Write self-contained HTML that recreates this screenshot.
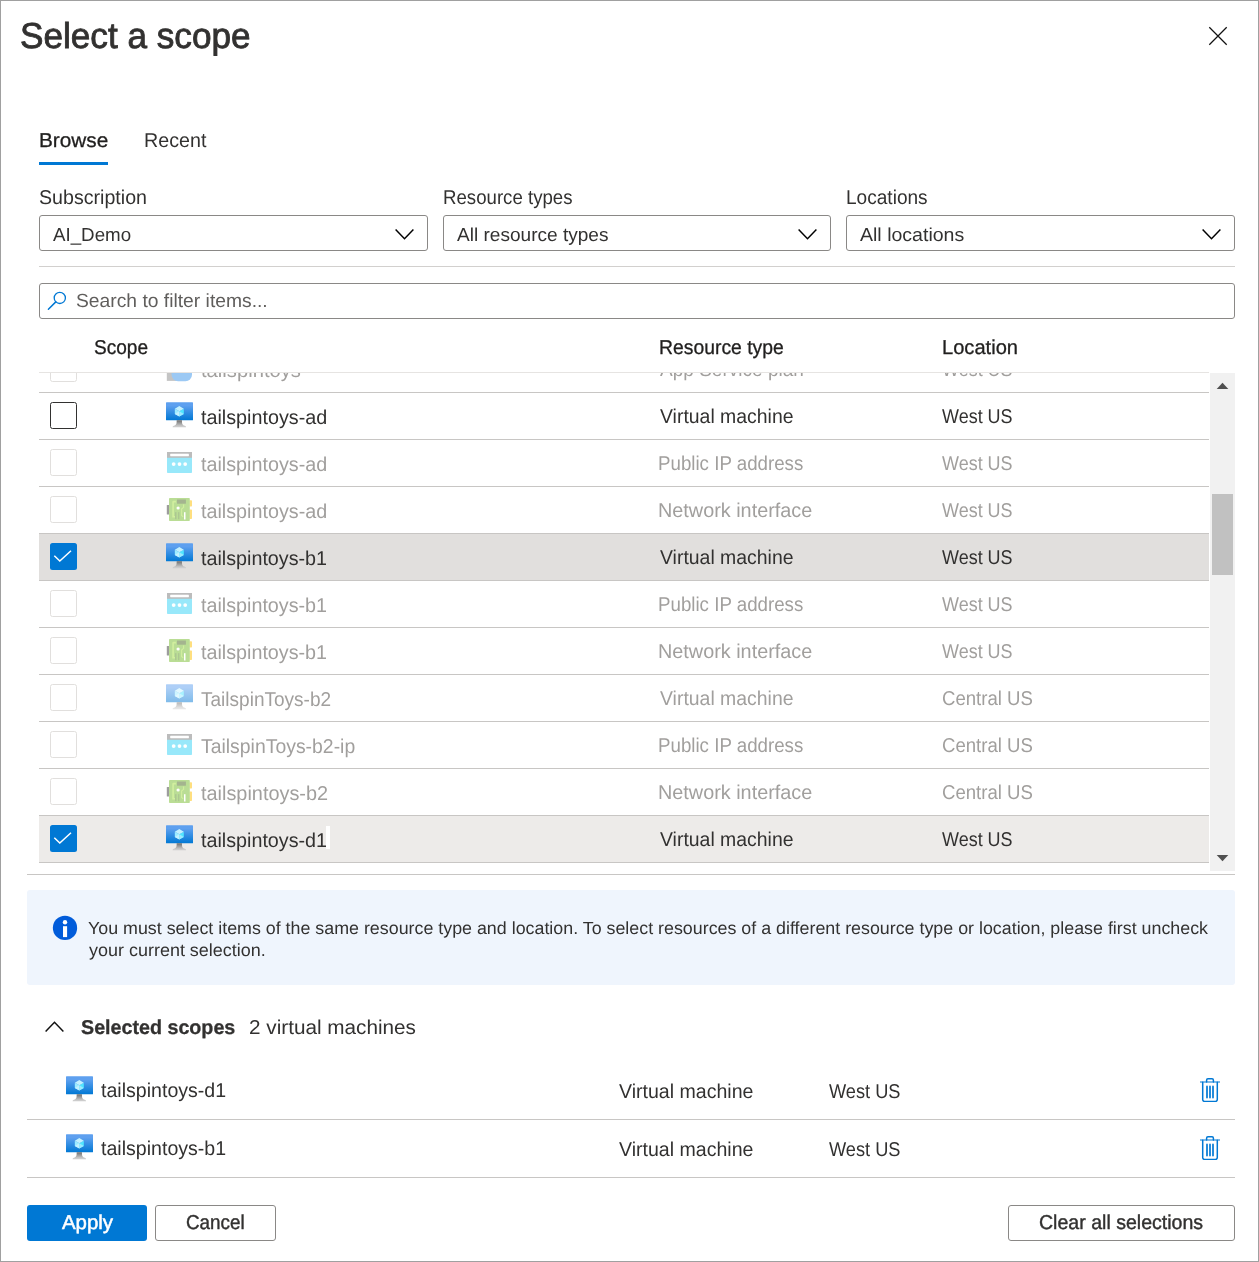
<!DOCTYPE html><html lang="en"><head><meta charset="utf-8"><title>Select a scope</title><style>
*{box-sizing:border-box;margin:0;padding:0}
html,body{width:1259px;height:1262px;background:#fff;overflow:hidden}
body{position:relative;font-family:"Liberation Sans",Arial,sans-serif}
.a{position:absolute}
.t{position:absolute;white-space:nowrap;line-height:normal;transform-origin:0 0;text-rendering:geometricPrecision}
.frame{left:0;top:0;width:1259px;height:1262px;border:1px solid #a0a0a0}
.dd{height:36px;top:215px;border:1px solid #8a8886;border-radius:3px;background:#fff}
.ln{height:1px;background:#c8c6c4}
.cb{width:27px;height:27px;left:50px;border-radius:2.5px}
.cb.en{border:1px solid #323130;background:#fff}
.cb.dis{border:1px solid #e1dfdd;background:#fff}
.cb.on{background:#0078d4}
.btn{top:1205px;height:36px;border-radius:3px}
.btn.sec{border:1px solid #8a8886;background:#fff}
.ic{position:absolute;width:27px;height:27px}
.dim{opacity:.5}
</style></head><body>

<svg width="0" height="0" style="position:absolute">
<defs>
<linearGradient id="vmA" x1="0" y1="12.21" x2="0" y2="0.21" gradientUnits="userSpaceOnUse"><stop offset="0" stop-color="#0078d4"/><stop offset="0.82" stop-color="#5ea0ef"/></linearGradient>
<linearGradient id="vmB" x1="0" y1="16.84" x2="0" y2="12.21" gradientUnits="userSpaceOnUse"><stop offset="0.15" stop-color="#ccc"/><stop offset="1" stop-color="#707070"/></linearGradient>
<symbol id="vm" viewBox="0 0 18 18">
<rect x="0" y="0.21" width="18" height="12" rx="0.4" fill="url(#vmA)"/>
<polygon points="11.88 4.46 11.88 7.95 8.88 9.71 8.88 6.21" fill="#50e6ff"/>
<polygon points="11.88 4.46 8.88 6.22 5.88 4.46 8.88 2.71" fill="#c3f1ff"/>
<polygon points="8.88 6.22 8.88 9.71 5.88 7.95 5.88 4.46" fill="#9cebff"/>
<polygon points="5.88 7.95 8.88 6.21 8.88 9.71" fill="#c3f1ff"/>
<polygon points="11.88 7.95 8.88 6.21 8.88 9.71" fill="#9cebff"/>
<path d="M12.49 15.84c-1.78-.28-1.85-1.56-1.85-3.63H7.11c0 2.07-.06 3.35-1.84 3.63a1 1 0 0 0-.89 1h9a1 1 0 0 0-.89-1z" fill="url(#vmB)"/>
</symbol>
<symbol id="pip" viewBox="0 0 27 27">
<rect x="1" y="3" width="25" height="21" rx="0.8" fill="#32d2f5"/>
<rect x="1" y="3" width="25" height="5.8" fill="#7a7a7a"/>
<rect x="4.2" y="4.8" width="18.7" height="2.4" rx="0.4" fill="#fff"/>
<circle cx="7.65" cy="15.1" r="1.9" fill="#fff"/><circle cx="13.5" cy="15.1" r="1.9" fill="#fff"/><circle cx="19.2" cy="15.1" r="1.9" fill="#fff"/>
</symbol>
<symbol id="nic" viewBox="0 0 27 27">
<rect x="0.8" y="9" width="2.6" height="9.4" rx="0.5" fill="#3b3b3b"/>
<rect x="23.4" y="4.2" width="2.6" height="6.3" rx="0.7" fill="#ffc000"/>
<rect x="23.4" y="13.4" width="2.6" height="9.6" rx="0.7" fill="#ffc000"/>
<rect x="3" y="2" width="20.8" height="23" rx="0.8" fill="#76bc2d"/>
<rect x="11" y="3.5" width="8.9" height="4.2" fill="#4a6a20"/>
<path d="M7.1 5.2v15.5h2.4M7.1 5.600h2.800" stroke="#a6e040" stroke-width="1.6" fill="none"/>
<path d="M17.6 8.5v2.800l-2 1.700v6.500l1.600 1.200" stroke="#a6e040" stroke-width="1.100" fill="none"/>
<circle cx="12.1" cy="12" r="1.6" fill="#fff"/>
<rect x="9" y="16.200" width="1.500" height="7" fill="#5a8f25"/><rect x="12" y="16.200" width="1.400" height="7" fill="#5a8f25"/>
<rect x="18" y="16.200" width="1.500" height="7.300" fill="#fff"/>
</symbol>
<symbol id="asp" viewBox="0 0 27 27">
<rect x="0.800" y="10" width="10" height="15.900" fill="#8a8a8a"/>
<rect x="5.600" y="8" width="20.400" height="18.200" rx="6.500" fill="#3a94ea"/>
</symbol>
<symbol id="trash" viewBox="0 0 20 24">
<path d="M0.300 4h19.400" stroke="#0078d4" stroke-width="1.200" stroke-linecap="round"/><path d="M6.600 3.900v-1.700a1.400 1.400 0 0 1 1.400-1.400h4a1.400 1.400 0 0 1 1.400 1.400v1.700M2.700 4.300v17.300a1.800 1.800 0 0 0 1.800 1.800h11a1.800 1.800 0 0 0 1.800-1.800V4.300" fill="none" stroke="#0078d4" stroke-width="1.500" stroke-linecap="round"/>
<path d="M7 8.400v11.200M10 8.400v11.200M13 8.400v11.200" stroke="#0078d4" stroke-width="1.700" stroke-linecap="round"/>
</symbol>
<symbol id="chev" viewBox="0 0 19 11"><path d="M0.600 0.600L9.500 9.700L18.400 0.600" fill="none" stroke="#000" stroke-width="1.500"/></symbol>
<symbol id="chk" viewBox="0 0 27 27"><path d="M4.300 12.800L9.800 18L21 7.800" fill="none" stroke="#fff" stroke-width="1.500"/></symbol>
</defs></svg>

<div id="w" class="a" style="left:0;top:0;width:1259px;height:1262px;will-change:transform">
<svg class="a" style="left:1205px;top:23px" width="26" height="26" viewBox="0 0 26 26"><path d="M4.300 4.300L21.700 21.700M21.700 4.300L4.300 21.700" stroke="#111" stroke-width="1.250" fill="none"/></svg>
<div class="a" style="left:39px;top:162px;width:69px;height:3px;background:#0078d4"></div>
<div class="a dd" style="left:39px;width:389px"></div>
<svg class="a" style="left:394.8px;top:228.700px" width="19" height="11"><use href="#chev"/></svg>
<div class="a dd" style="left:443px;width:388px"></div>
<svg class="a" style="left:797.8px;top:228.700px" width="19" height="11"><use href="#chev"/></svg>
<div class="a dd" style="left:846px;width:389px"></div>
<svg class="a" style="left:1201.8px;top:228.700px" width="19" height="11"><use href="#chev"/></svg>
<div class="a ln" style="left:39px;top:266px;width:1196px;background:#d2d0ce"></div>
<div class="a" style="left:39px;top:283px;width:1196px;height:36px;border:1px solid #8a8886;border-radius:3px"></div>
<svg class="a" style="left:46px;top:290.400px" width="22" height="22" viewBox="0 0 22 22"><circle cx="13.800" cy="7.900" r="5.600" fill="none" stroke="#0078d4" stroke-width="1.300"/><path d="M9.800 11.900L2.400 19.300" stroke="#0078d4" stroke-width="1.500" stroke-linecap="round"/></svg>
<div class="a ln" style="left:39px;top:372px;width:1170px;background:#e6e4e2"></div>
<h1 class="t" style="font-weight:400;left:19.61px;top:15.00px;font-size:36px;color:#323130;transform:scaleX(0.9762);-webkit-text-stroke:0.85px #323130;">Select a scope</h1>
<span class="t" style="left:39.07px;top:130.00px;font-size:20px;color:#201f1e;transform:scaleX(1.0395);-webkit-text-stroke:0.3px #201f1e;">Browse</span>
<span class="t" style="left:144.02px;top:130.00px;font-size:20px;color:#323130;transform:scaleX(0.9838);">Recent</span>
<span class="t" style="left:38.53px;top:187.00px;font-size:20px;color:#323130;transform:scaleX(0.9809);">Subscription</span>
<span class="t" style="left:442.69px;top:187.00px;font-size:20px;color:#323130;transform:scaleX(0.9320);">Resource types</span>
<span class="t" style="left:846.06px;top:187.00px;font-size:20px;color:#323130;transform:scaleX(0.9536);">Locations</span>
<span class="t" style="left:53.01px;top:224.00px;font-size:18.8px;color:#323130;transform:scaleX(0.9973);">AI_Demo</span>
<span class="t" style="left:456.61px;top:224.00px;font-size:18.8px;color:#323130;transform:scaleX(1.0150);">All resource types</span>
<span class="t" style="left:859.61px;top:224.00px;font-size:18.8px;color:#323130;transform:scaleX(1.0399);">All locations</span>
<span class="t" style="left:76.14px;top:291.00px;font-size:19px;color:#605e5c;transform:scaleX(1.0143);">Search to filter items...</span>
<span class="t" style="left:94.00px;top:337.00px;font-size:20px;color:#201f1e;transform:scaleX(0.9531);-webkit-text-stroke:0.3px #201f1e;">Scope</span>
<span class="t" style="left:658.86px;top:337.00px;font-size:20px;color:#201f1e;transform:scaleX(0.9675);-webkit-text-stroke:0.3px #201f1e;">Resource type</span>
<span class="t" style="left:941.51px;top:337.00px;font-size:20px;color:#201f1e;transform:scaleX(1.0051);-webkit-text-stroke:0.3px #201f1e;">Location</span>
<div class="a" style="left:0;top:373px;width:1209px;height:490px;overflow:hidden"><div class="a" style="left:0;top:-373px;width:1209px;height:1262px">
<div class="a ln" style="left:39px;top:392px;width:1170px"></div>
<div class="a cb dis" style="top:355px"></div>
<svg class="ic dim" style="left:166px;top:355.0px"><use href="#asp"/></svg>
<div class="a ln" style="left:39px;top:439px;width:1170px"></div>
<div class="a cb en" style="top:402px"></div>
<svg class="ic" style="left:166px;top:401.7px"><use href="#vm"/></svg>
<div class="a ln" style="left:39px;top:486px;width:1170px"></div>
<div class="a cb dis" style="top:449px"></div>
<svg class="ic dim" style="left:166px;top:449.0px"><use href="#pip"/></svg>
<div class="a ln" style="left:39px;top:533px;width:1170px"></div>
<div class="a cb dis" style="top:496px"></div>
<svg class="ic dim" style="left:166px;top:496.0px"><use href="#nic"/></svg>
<div class="a" style="left:39px;top:534px;width:1170px;height:46px;background:#e1dfdd"></div>
<div class="a ln" style="left:39px;top:580px;width:1170px"></div>
<div class="a cb on" style="top:543px"><svg width="27" height="27" style="display:block"><use href="#chk"/></svg></div>
<svg class="ic" style="left:166px;top:542.7px"><use href="#vm"/></svg>
<div class="a ln" style="left:39px;top:627px;width:1170px"></div>
<div class="a cb dis" style="top:590px"></div>
<svg class="ic dim" style="left:166px;top:590.0px"><use href="#pip"/></svg>
<div class="a ln" style="left:39px;top:674px;width:1170px"></div>
<div class="a cb dis" style="top:637px"></div>
<svg class="ic dim" style="left:166px;top:637.0px"><use href="#nic"/></svg>
<div class="a ln" style="left:39px;top:721px;width:1170px"></div>
<div class="a cb dis" style="top:684px"></div>
<svg class="ic dim" style="left:166px;top:683.7px"><use href="#vm"/></svg>
<div class="a ln" style="left:39px;top:768px;width:1170px"></div>
<div class="a cb dis" style="top:731px"></div>
<svg class="ic dim" style="left:166px;top:731.0px"><use href="#pip"/></svg>
<div class="a ln" style="left:39px;top:815px;width:1170px"></div>
<div class="a cb dis" style="top:778px"></div>
<svg class="ic dim" style="left:166px;top:778.0px"><use href="#nic"/></svg>
<div class="a" style="left:39px;top:816px;width:1170px;height:46px;background:#edebe9"></div>
<div class="a ln" style="left:39px;top:862px;width:1170px"></div>
<div class="a cb on" style="top:825px"><svg width="27" height="27" style="display:block"><use href="#chk"/></svg></div>
<svg class="ic" style="left:166px;top:824.7px"><use href="#vm"/></svg>
<span class="t" style="left:200.78px;top:360.00px;font-size:20px;color:#a19f9d;transform:scaleX(1.0104);">tailspintoys</span>
<span class="t" style="left:659.61px;top:359.00px;font-size:20px;color:#a19f9d;transform:scaleX(0.9516);">App Service plan</span>
<span class="t" style="left:942.34px;top:359.00px;font-size:20px;color:#a19f9d;transform:scaleX(0.8989);">West US</span>
<span class="t" style="left:200.79px;top:407.00px;font-size:20px;color:#323130;transform:scaleX(0.9875);">tailspintoys-ad</span>
<span class="t" style="left:659.51px;top:406.00px;font-size:20px;color:#323130;transform:scaleX(0.9711);">Virtual machine</span>
<span class="t" style="left:942.34px;top:406.00px;font-size:20px;color:#323130;transform:scaleX(0.8989);">West US</span>
<span class="t" style="left:200.79px;top:454.00px;font-size:20px;color:#a19f9d;transform:scaleX(0.9875);">tailspintoys-ad</span>
<span class="t" style="left:658.48px;top:453.00px;font-size:20px;color:#a19f9d;transform:scaleX(0.9359);">Public IP address</span>
<span class="t" style="left:942.34px;top:453.00px;font-size:20px;color:#a19f9d;transform:scaleX(0.8989);">West US</span>
<span class="t" style="left:200.79px;top:501.00px;font-size:20px;color:#a19f9d;transform:scaleX(0.9875);">tailspintoys-ad</span>
<span class="t" style="left:658.41px;top:500.00px;font-size:20px;color:#a19f9d;transform:scaleX(0.9911);">Network interface</span>
<span class="t" style="left:942.34px;top:500.00px;font-size:20px;color:#a19f9d;transform:scaleX(0.8989);">West US</span>
<span class="t" style="left:200.79px;top:548.00px;font-size:20px;color:#323130;transform:scaleX(0.9860);">tailspintoys-b1</span>
<span class="t" style="left:659.51px;top:547.00px;font-size:20px;color:#323130;transform:scaleX(0.9711);">Virtual machine</span>
<span class="t" style="left:942.34px;top:547.00px;font-size:20px;color:#323130;transform:scaleX(0.8989);">West US</span>
<span class="t" style="left:200.79px;top:595.00px;font-size:20px;color:#a19f9d;transform:scaleX(0.9860);">tailspintoys-b1</span>
<span class="t" style="left:658.48px;top:594.00px;font-size:20px;color:#a19f9d;transform:scaleX(0.9359);">Public IP address</span>
<span class="t" style="left:942.34px;top:594.00px;font-size:20px;color:#a19f9d;transform:scaleX(0.8989);">West US</span>
<span class="t" style="left:200.79px;top:642.00px;font-size:20px;color:#a19f9d;transform:scaleX(0.9860);">tailspintoys-b1</span>
<span class="t" style="left:658.41px;top:641.00px;font-size:20px;color:#a19f9d;transform:scaleX(0.9911);">Network interface</span>
<span class="t" style="left:942.34px;top:641.00px;font-size:20px;color:#a19f9d;transform:scaleX(0.8989);">West US</span>
<span class="t" style="left:200.74px;top:689.00px;font-size:20px;color:#a19f9d;transform:scaleX(0.9516);">TailspinToys-b2</span>
<span class="t" style="left:659.51px;top:688.00px;font-size:20px;color:#a19f9d;transform:scaleX(0.9711);">Virtual machine</span>
<span class="t" style="left:941.57px;top:688.00px;font-size:20px;color:#a19f9d;transform:scaleX(0.9295);">Central US</span>
<span class="t" style="left:200.73px;top:736.00px;font-size:20px;color:#a19f9d;transform:scaleX(0.9700);">TailspinToys-b2-ip</span>
<span class="t" style="left:658.48px;top:735.00px;font-size:20px;color:#a19f9d;transform:scaleX(0.9359);">Public IP address</span>
<span class="t" style="left:941.57px;top:735.00px;font-size:20px;color:#a19f9d;transform:scaleX(0.9295);">Central US</span>
<span class="t" style="left:200.79px;top:783.00px;font-size:20px;color:#a19f9d;transform:scaleX(0.9940);">tailspintoys-b2</span>
<span class="t" style="left:658.41px;top:782.00px;font-size:20px;color:#a19f9d;transform:scaleX(0.9911);">Network interface</span>
<span class="t" style="left:941.57px;top:782.00px;font-size:20px;color:#a19f9d;transform:scaleX(0.9295);">Central US</span>
<span class="t" style="left:200.79px;top:830.00px;font-size:20px;color:#323130;transform:scaleX(0.9860);">tailspintoys-d1</span>
<span class="t" style="left:659.51px;top:829.00px;font-size:20px;color:#323130;transform:scaleX(0.9711);">Virtual machine</span>
<span class="t" style="left:942.34px;top:829.00px;font-size:20px;color:#323130;transform:scaleX(0.8989);">West US</span>
<div class="a" style="left:325.500px;top:826px;width:4px;height:22.500px;background:#fff"></div>
</div></div>
<div class="a" style="left:1210px;top:373px;width:25px;height:498px;background:#f1f1f1"></div>
<div class="a" style="left:1212px;top:494px;width:21px;height:81px;background:#c1c1c1"></div>
<svg class="a" style="left:1216px;top:382px" width="13" height="8" viewBox="0 0 13 8"><path d="M0.700 7L6.500 0.800L12.300 7z" fill="#505050"/></svg>
<svg class="a" style="left:1216px;top:854px" width="13" height="8" viewBox="0 0 13 8"><path d="M0.700 1L6.500 7.200L12.300 1z" fill="#505050"/></svg>
<div class="a ln" style="left:27px;top:874px;width:1208px"></div>
<div class="a" style="left:27px;top:890px;width:1208px;height:95px;background:#eff5fd;border-radius:3px"></div>
<svg class="a" style="left:52px;top:915px" width="26" height="26" viewBox="0 0 26 26"><circle cx="13" cy="12.900" r="12.150" fill="#015cda"/><circle cx="13" cy="7.300" r="2.200" fill="#fff"/><rect x="11" y="11.200" width="4.100" height="10.900" fill="#fff"/></svg>
<svg class="a" style="left:44.500px;top:1021.300px" width="19" height="11" viewBox="0 0 19 11"><path d="M0.600 10.400L9.500 1.300L18.400 10.400" fill="none" stroke="#111" stroke-width="1.500"/></svg>
<svg class="ic" style="left:66px;top:1075.500px"><use href="#vm"/></svg>
<svg class="ic" style="left:66px;top:1133.500px"><use href="#vm"/></svg>
<div class="a ln" style="left:27px;top:1119px;width:1208px"></div>
<div class="a ln" style="left:27px;top:1177px;width:1208px"></div>
<svg class="a" style="left:1200px;top:1077.500px" width="20" height="24"><use href="#trash"/></svg>
<svg class="a" style="left:1200px;top:1135.500px" width="20" height="24"><use href="#trash"/></svg>
<div class="a btn" style="left:27px;width:120px;background:#0078d4"></div>
<div class="a btn sec" style="left:155px;width:121px"></div>
<div class="a btn sec" style="left:1008px;width:227px"></div>
<span class="t" style="left:87.99px;top:918.00px;font-size:17.6px;color:#323130;transform:scaleX(1.0138);">You must select items of the same resource type and location. To select resources of a different resource type or location, please first uncheck</span>
<span class="t" style="left:88.85px;top:940.00px;font-size:17.6px;color:#323130;transform:scaleX(1.0213);">your current selection.</span>
<span class="t" style="left:81.44px;top:1017.00px;font-size:20px;color:#323130;transform:scaleX(0.9843);font-weight:700;-webkit-text-stroke:0.3px #323130;">Selected scopes</span>
<span class="t" style="left:249.16px;top:1017.00px;font-size:20px;color:#323130;transform:scaleX(1.0360);">2 virtual machines</span>
<span class="t" style="left:101.09px;top:1080.00px;font-size:20px;color:#323130;transform:scaleX(0.9789);">tailspintoys-d1</span>
<span class="t" style="left:619.31px;top:1081.00px;font-size:20px;color:#323130;transform:scaleX(0.9777);">Virtual machine</span>
<span class="t" style="left:829.14px;top:1081.00px;font-size:20px;color:#323130;transform:scaleX(0.9105);">West US</span>
<span class="t" style="left:101.09px;top:1138.00px;font-size:20px;color:#323130;transform:scaleX(0.9789);">tailspintoys-b1</span>
<span class="t" style="left:619.31px;top:1139.00px;font-size:20px;color:#323130;transform:scaleX(0.9777);">Virtual machine</span>
<span class="t" style="left:829.14px;top:1139.00px;font-size:20px;color:#323130;transform:scaleX(0.9105);">West US</span>
<span class="t" style="left:61.69px;top:1212.00px;font-size:20px;color:#ffffff;transform:scaleX(1.0211);-webkit-text-stroke:0.5px #ffffff;">Apply</span>
<span class="t" style="left:185.76px;top:1212.00px;font-size:20px;color:#323130;transform:scaleX(0.9433);-webkit-text-stroke:0.4px #323130;">Cancel</span>
<span class="t" style="left:1039.02px;top:1212.00px;font-size:20px;color:#323130;transform:scaleX(0.9777);-webkit-text-stroke:0.4px #323130;">Clear all selections</span>
<div class="a frame"></div>
</div></body></html>
